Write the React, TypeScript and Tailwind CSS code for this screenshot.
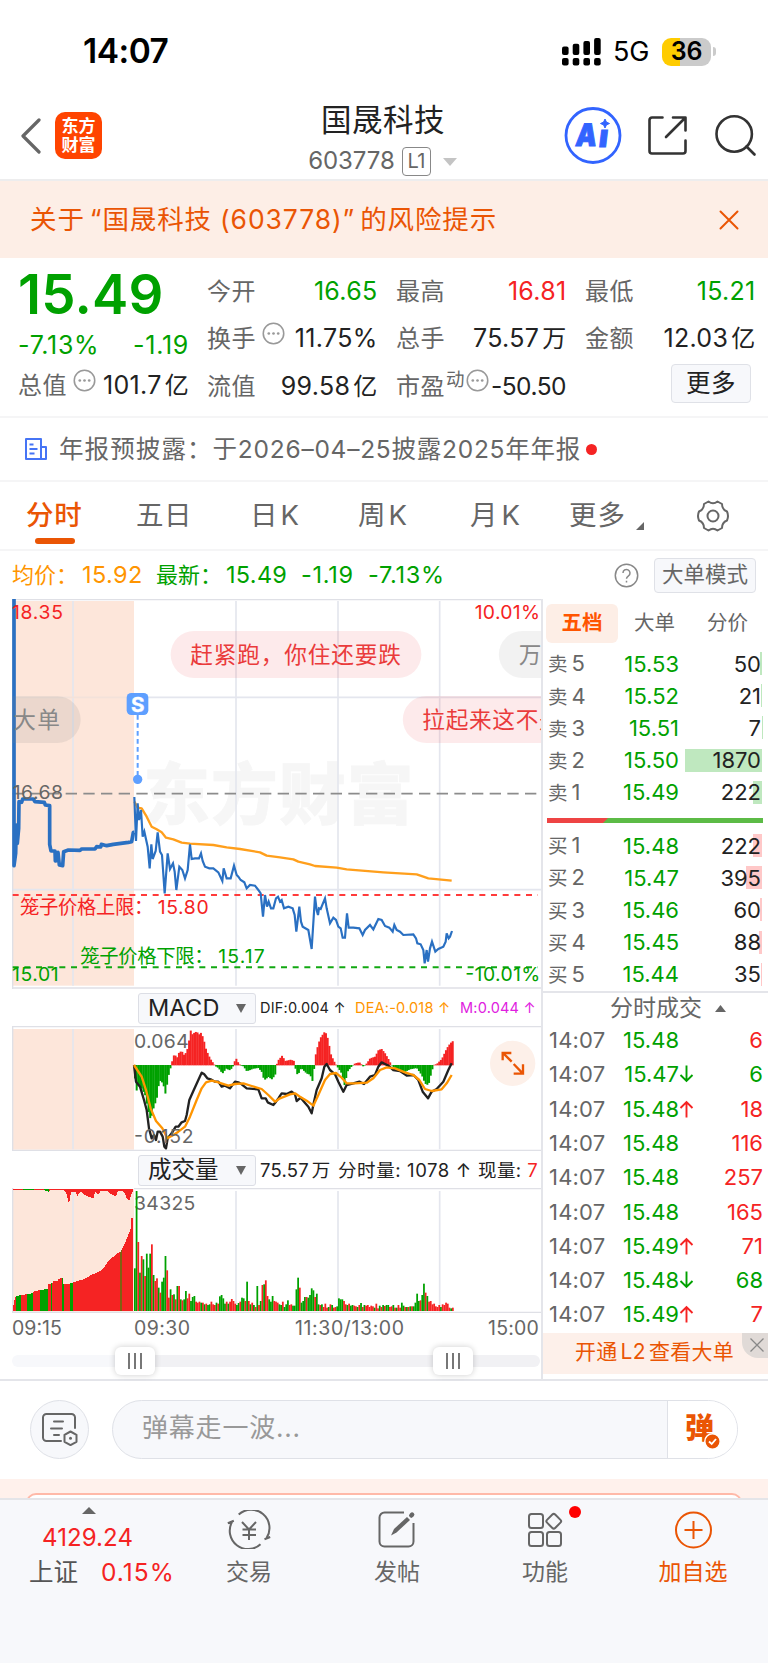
import React from "react";

// order book, best ask last
const asks = [
  { label: "5", price: "15.53", volume: "50", bar: 2 },
  { label: "4", price: "15.52", volume: "21", bar: 1 },
  { label: "3", price: "15.51", volume: "7", bar: 0.5 },
  { label: "2", price: "15.50", volume: "1870", bar: 77 },
  { label: "1", price: "15.49", volume: "222", bar: 9 },
];

const bids = [
  { label: "1", price: "15.48", volume: "222", bar: 9 },
  { label: "2", price: "15.47", volume: "395", bar: 16 },
  { label: "3", price: "15.46", volume: "60", bar: 2.5 },
  { label: "4", price: "15.45", volume: "88", bar: 3.5 },
  { label: "5", price: "15.44", volume: "35", bar: 1.5 },
];

const trades = [
  { price: "15.48", dir: "", volume: "6", buy: true },
  { price: "15.47", dir: "down", volume: "6", buy: false },
  { price: "15.48", dir: "up", volume: "18", buy: true },
  { price: "15.48", dir: "", volume: "116", buy: true },
  { price: "15.48", dir: "", volume: "257", buy: true },
  { price: "15.48", dir: "", volume: "165", buy: true },
  { price: "15.49", dir: "up", volume: "71", buy: true },
  { price: "15.48", dir: "down", volume: "68", buy: false },
  { price: "15.49", dir: "up", volume: "7", buy: true },
];

const auctionLine =
  "42,12 42,812 47,775 49,690 52,745 56,700 57,620 65,622 68,612 100,612 105,620 133,622 136,630 149,632 149,748 153,768 165,768 166,798 172,795 174,772 178,810 188,812 191,770 205,765 240,766 245,762 285,762 290,755 302,756 304,748 320,752 340,748 385,742 395,740 400,712 403,712";

const priceLine =
  "403,606 408,738 413,625 417,675 423,645 428,725 433,710 443,755 449,820 454,748 458,792 467,768 473,712 480,770 486,780 494,895 503,775 510,822 519,805 524,830 529,885 538,815 547,825 555,850 563,825 570,748 575,792 585,790 597,790 603,775 608,798 615,815 628,820 640,820 655,832 667,858 671,820 680,850 692,850 702,812 710,840 715,845 722,855 733,862 740,880 750,870 765,872 775,885 782,895 789,965 795,900 801,935 806,920 813,940 820,940 828,910 834,905 840,920 845,915 852,940 865,935 878,940 884,960 889,1010 898,935 903,980 908,995 925,1005 935,1062 945,905 950,945 954,960 957,940 962,942 975,910 980,940 990,985 1000,968 1008,975 1015,995 1022,1000 1028,1028 1035,1028 1041,955 1046,998 1060,998 1078,1000 1088,1020 1095,1005 1110,990 1120,1003 1135,972 1145,975 1155,993 1168,998 1178,1010 1183,990 1190,1005 1200,1010 1210,1020 1240,1018 1248,1030 1252,1045 1262,1048 1270,1065 1274,1105 1280,1065 1284,1100 1290,1060 1296,1040 1306,1070 1315,1062 1330,1055 1337,1040 1340,1015 1346,1030 1350,1025 1356,1008";

const averageLine =
  "403,620 413,638 425,640 440,665 455,695 470,703 485,712 498,728 520,733 545,743 570,746 640,750 680,757 720,762 780,772 800,782 840,787 880,793 895,800 930,808 945,813 1010,818 1040,823 1150,832 1250,838 1270,845 1285,850 1355,857";

const difLine =
  "402,240 408,290 420,305 432,345 440,375 447,430 455,460 462,450 468,465 473,440 480,440 488,455 493,485 498,490 503,460 515,445 527,425 535,425 545,412 555,408 560,390 568,345 580,318 595,285 605,263 612,267 622,280 632,283 645,290 655,290 665,305 675,302 690,310 705,290 715,292 725,298 740,310 775,313 785,340 797,340 803,352 820,360 828,350 835,340 845,325 860,327 875,320 885,328 890,348 902,338 912,350 925,365 935,385 942,350 950,315 965,280 973,245 980,237 990,255 1005,268 1015,290 1030,320 1040,300 1060,295 1078,290 1092,297 1110,275 1125,270 1135,245 1145,232 1155,237 1165,242 1180,255 1200,258 1220,272 1240,270 1255,285 1268,320 1284,340 1295,320 1310,312 1330,290 1345,255 1355,235";

const deaLine =
  "402,240 425,275 438,315 452,370 468,408 487,430 502,460 520,450 535,440 555,425 570,395 590,345 605,310 618,292 635,287 655,292 685,302 705,297 730,295 755,303 785,312 805,330 825,350 840,340 870,328 885,325 900,335 920,347 940,362 955,330 975,285 990,267 1008,264 1025,278 1040,295 1065,295 1100,293 1120,280 1140,255 1160,247 1185,250 1215,262 1240,270 1258,285 1275,312 1295,318 1325,313 1340,295 1355,270";

const macdPoints = [
  402, -10, 408, -80, 415, -60, 425, -70, 435, -90, 445, -140, 452, -165, 460, -130, 470, -100, 478, -45, 485, -50, 490, -60,
  497, -90, 503, -40, 512, -5, 517, 15, 523, 35, 530, 20, 537, 38, 545, 42, 552, 30, 560, 40, 566, 68, 571, 105, 578, 90,
  583, 98, 590, 100, 597, 92, 603, 97, 610, 80, 617, 50, 623, 35, 630, 20, 638, 8, 645, -2, 655, -8, 667, -25, 678, -10,
  690, -15, 698, -5, 702, 8, 708, 20, 714, 8, 720, 0, 730, -3, 740, -18, 760, -10, 775, -8, 785, -20, 792, -45, 805, -35,
  815, -42, 825, -30, 829, 0, 835, 15, 846, 28, 856, 12, 872, 16, 882, 12, 888, -20, 893, -30, 903, -8, 920, -25, 930, -28,
  938, -50, 943, 0, 948, 40, 960, 80, 975, 102, 983, 80, 993, 30, 1005, 5, 1012, -5, 1025, -25, 1033, -60, 1043, -18,
  1055, -3, 1065, 5, 1078, 8, 1090, -4, 1100, 5, 1110, 20, 1125, 25, 1135, 45, 1145, 48, 1155, 35, 1165, 18, 1173, 2,
  1185, -10, 1210, -22, 1230, -12, 1250, -8, 1265, -30, 1275, -55, 1285, -60, 1292, -30, 1300, 0, 1310, 3, 1325, 18,
  1340, 50, 1350, 65, 1362, 75,
];

const auctionVolume = [
  38, 18, 43, 43, 50, 46, 95, 53, 100, 60, 140, 66, 142, 81, 155, 83, 158, 90, 170, 91, 172, 97, 185, 98, 187, 81, 200, 80,
  215, 85, 250, 96, 275, 110, 295, 118, 310, 130, 322, 150, 350, 173, 360, 178, 370, 198, 390, 248, 392, 278, 400, 278,
];

const unmatchedVolume = [
  38, 3, 130, 3, 143, 8, 150, 3, 190, 4, 197, 15, 203, 38, 207, 35, 210, 10, 225, 10, 230, 20, 240, 8, 255, 20, 265, 24,
  278, 28, 283, 8, 292, 18, 300, 5, 320, 5, 330, 15, 345, 22, 352, 5, 370, 8, 378, 28, 385, 35, 390, 20, 398, 3,
];

const volumes =
  "g128 g360 r207 g115 r165 g155 r105 g172 g130 g172 r200 g108 r90 r98 g70 r55 g88 g100 g165 r122 r40 g65 r48 g50 r35 g75 r75 g35 r32 g35 g60 r38 r52 g30 g42 g45 r28 r25 r28 g25 r25 g20 r22 g18 g20 r28 r20 r18 g25 r22 g44 g48 g38 g22 r28 g22 r28 r36 r30 r22 g18 g24 r28 g40 g38 r30 g88 r30 g20 r25 g18 r12 g75 r18 g30 r78 g80 r92 r45 g35 g28 g45 r30 r28 r25 g20 g18 r28 g12 g20 g32 r18 r20 g16 g16 g65 g100 r70 g25 g30 g42 r42 g40 g48 g68 g62 r42 g52 g20 r18 g20 r12 r22 r10 g12 r20 g18 r10 r12 g14 g38 g35 g35 r30 r20 g18 r22 g16 g18 r16 r14 g12 r18 g24 r12 g18 r16 r18 r12 r16 r14 g10 r22 r8 g16 r12 g18 r15 g18 g18 r12 r14 g18 r10 g10 r18 r10 g25 g16 r12 g12 r12 g14 r14 g14 g25 g52 g30 r32 g48 g82 r55 g45 r28 r30 r20 r22 r14 r12 r18 g12 r20 r18 r25 r22 r10 g8 r10".split(
    " "
  );

const greenRanges = [
  [47, 60],
  [78, 97],
  [117, 142],
  [152, 155],
  [185, 189],
  [207, 216],
  [358, 364],
];

const RED = "#f52323";
const GREEN = "#00a100";

// pairs is a flat [x, y, x, y, ...] list sorted by x
function valueAt(pairs: number[], x: number) {
  for (let i = 2; i < pairs.length; i += 2) {
    if (x <= pairs[i]) {
      const t = (x - pairs[i - 2]) / (pairs[i] - pairs[i - 2]);
      return pairs[i - 1] + t * (pairs[i + 1] - pairs[i - 1]);
    }
  }
  return pairs[pairs.length - 1];
}

function range(from: number, to: number, step: number) {
  const out: number[] = [];
  for (let x = from; x < to; x += step) out.push(x);
  return out;
}

const Dots = () => (
  <svg className="size-[23px] shrink-0" viewBox="0 0 22 22" fill="none">
    <circle cx="11" cy="11" r="9.8" stroke="#999" strokeWidth="1.5" />
    <g fill="#999">
      <circle cx="6.5" cy="11" r="1.3" />
      <circle cx="11" cy="11" r="1.3" />
      <circle cx="15.5" cy="11" r="1.3" />
    </g>
  </svg>
);

const StatusBar = () => (
  <div className="flex h-[95px] items-center justify-between pl-[83px] pr-[52px] pt-[8px] text-black">
    <span className="text-[33.5px] font-semibold leading-none tracking-[-0.5px]">14:07</span>
    <div className="flex items-center">
      <svg width="39" height="28" viewBox="0 0 39 28">
        {[0, 1, 2, 3].map((i) => (
          <g key={i}>
            <rect x={i * 10.7} y="20" width="6.6" height="7.5" rx="2" />
            <rect x={i * 10.7} y={8.5 - i * 2.8} width="6.6" height={8.5 + i * 2.8} rx="2" />
          </g>
        ))}
      </svg>
      <span className="ml-[12px] text-[27px] leading-none tracking-[-0.3px]">5G</span>
      <div className="ml-[13px] flex h-7 w-[49px] items-center justify-center rounded-[9px] bg-linear-to-r from-[#ffcc00] from-36% to-[#cbcbcb] to-36%">
        <span className="text-[25px] font-semibold leading-none tracking-[-0.3px]">36</span>
      </div>
      <div className="ml-[2px] h-[9px] w-[3px] rounded-r-full bg-[#cbcbcb]" />
    </div>
  </div>
);

const Header = () => (
  <div className="flex h-[86px] border-b-2 border-[#ededee]">
    <div className="flex w-[290px] items-start">
      <svg className="ml-5 mt-[23px]" width="22" height="36" viewBox="0 0 22 36" fill="none">
        <path d="M19 2 3 18l16 16" stroke="#666" strokeWidth="3.2" strokeLinecap="round" strokeLinejoin="round" />
      </svg>
      <div className="ml-[13px] mt-[17px] flex h-[47px] w-[47px] flex-col items-center justify-center rounded-[10px] bg-[#ff4400] text-[17px] font-bold leading-[19px] text-white">
        <span>东方</span>
        <span>财富</span>
      </div>
    </div>
    <div className="flex w-[186px] flex-col items-center pt-[8px]">
      <span className="text-[30.5px] leading-[34px] tracking-[0.5px] text-[#222]">国晟科技</span>
      <div className="mt-[9px] flex items-center text-[#666]">
        <span className="text-[24px] leading-[30px] tracking-[-0.1px]">603778</span>
        <span className="ml-[7px] flex h-[29px] w-[29px] items-center justify-center rounded-[4px] border-[1.5px] border-[#888] text-[20px] leading-none tracking-[-0.5px]">
          L1
        </span>
        <svg className="ml-[11px]" width="16" height="9" viewBox="0 0 16 9">
          <path d="M1 1h14L8 9z" fill="#c4c4c4" />
        </svg>
      </div>
    </div>
    <div className="ml-[88px] flex">
      <svg className="mt-[12px]" width="58" height="57" viewBox="0 0 58 57">
        <circle cx="29" cy="28.5" r="27" fill="none" stroke="#3264ff" strokeWidth="2.8" />
        <g transform="translate(5 0) skewX(-7)" fontSize="31" fontWeight="900" fill="#3264ff" stroke="#3264ff" strokeWidth="1">
          <text x="10.500" y="39" textLength="21" lengthAdjust="spacingAndGlyphs">A</text>
          <text x="34" y="40" textLength="9" lengthAdjust="spacingAndGlyphs">ı</text>
        </g>
        <path d="M41 12l1.400 3.100 3.100 1.400-3.100 1.400-1.400 3.100-1.400-3.100-3.100-1.400 3.100-1.400z" fill="#3264ff" stroke="#3264ff" />
      </svg>
      <svg className="ml-[25px] mt-[20px]" width="42" height="42" viewBox="0 0 42 42" fill="none" stroke="#333" strokeWidth="2.6" strokeLinecap="round" strokeLinejoin="round">
        <path d="M15.500 2.500H5A2.500 2.500 0 0 0 2.500 5V36A2.500 2.500 0 0 0 5 38.500H36A2.500 2.500 0 0 0 38.500 36V25.500" />
        <path d="M26 2.500H38.500V15.500M38 3 19 22" />
      </svg>
      <svg className="ml-[25px] mt-[19px]" width="44" height="44" viewBox="0 0 44 44" fill="none" stroke="#333" strokeWidth="2.6" strokeLinecap="round">
        <circle cx="20.200" cy="20" r="17.700" />
        <path d="M32.500 32.500 40.500 40.500" />
      </svg>
    </div>
  </div>
);

const RiskBanner = () => (
  <div className="flex h-[77px] items-center justify-between bg-[#fdeee6] pl-[30px] pr-[29px] text-[#ea5504]">
    <span className="whitespace-pre text-[26.500px] leading-none tracking-[0.9px]">
      关于<span className="ml-[5px]">“</span>国晟科技<span className="ml-[8px]">(603778)</span>”<span className="ml-[5px]">的风险提示</span>
    </span>
    <svg width="20" height="20" viewBox="0 0 20 20" stroke="#ea5504" strokeWidth="2" strokeLinecap="round">
      <path d="M1.500 1.500l17 17M18.500 1.500l-17 17" />
    </svg>
  </div>
);

const Cell = ({ label, value, color = "text-[#222]", icon, unit }: { label: string; value: string; color?: string; icon?: boolean; unit?: string }) => (
  <div className="flex w-[170px] items-center justify-between">
    <span className="flex items-center gap-[6px] text-[24px] tracking-[0.5px] text-[#666]">
      {label}
      {icon && <span className="-mt-[11px]"><Dots /></span>}
    </span>
    <span className={`${color} -mr-[0.5px] text-[25px] tracking-[0.3px]`}>
      {value}
      {unit && <span className="ml-[3px] text-[24px]">{unit}</span>}
    </span>
  </div>
);

const Quotes = () => (
  <div className="flex h-[160px] gap-[19px] border-b-2 border-[#f5f5f6] pl-[18px] pt-[10px] leading-[47.3px]">
    <div className="flex w-[170px] flex-col text-[#00a100]">
      <span className="h-[54px] text-[54.500px] font-semibold leading-[52px] tracking-[0.2px]">15.49</span>
      <div className="-mr-[1px] flex h-[40px] justify-between text-[25px] leading-[46px] tracking-[0.7px]">
        <span>-7.13%</span>
        <span>-1.19</span>
      </div>
      <div className="-mr-[1px] flex h-[48px] items-center justify-between text-[25px] tracking-[0.3px] text-[#222]">
        <span className="flex items-center gap-[6px] text-[24px] tracking-[0.5px] text-[#666]">
          总值
          <span className="-mt-[11px]"><Dots /></span>
        </span>
        <span>101.7<span className="ml-[3px] text-[24px]">亿</span></span>
      </div>
    </div>
    <div>
      <Cell label="今开" value="16.65" color="text-[#00a100]" />
      <Cell label="换手" value="11.75%" icon />
      <Cell label="流值" value="99.58" unit="亿" />
    </div>
    <div>
      <Cell label="最高" value="16.81" color="text-[#f52323]" />
      <Cell label="总手" value="75.57" unit="万" />
      <div className="flex w-[170px] items-center justify-between">
        <span className="flex items-center text-[24px] tracking-[0.5px] text-[#666]">
          市盈
          <span className="-mt-[14px] ml-[1px] text-[18.500px] tracking-normal">动</span>
          <span className="-mt-[11px] ml-[1px]"><Dots /></span>
        </span>
        <span className="text-[24.500px] tracking-[-0.5px] text-[#222]">-50.50</span>
      </div>
    </div>
    <div>
      <Cell label="最低" value="15.21" color="text-[#00a100]" />
      <Cell label="金额" value="12.03" unit="亿" />
      <div className="ml-auto mr-[4px] mt-[1px] flex h-[39px] w-[80px] items-center justify-center rounded-[4px] border-[1.5px] border-[#dfe1e7] bg-[#f7f8fb] text-[24.5px] leading-none tracking-[0.5px] text-[#222]">
        更多
      </div>
    </div>
  </div>
);

const Notice = () => (
  <div className="flex h-[64px] items-center border-b-2 border-[#f5f5f6] pl-6 text-[#666]">
    <svg width="24" height="24" viewBox="0 0 24 24" fill="none" stroke="#4674f5" strokeWidth="2" strokeLinejoin="round">
      <path d="M2 2h15v20H2zM17 10h5v12H2M5.500 7.500h4M5.500 12h8M5.500 16.500h5" />
    </svg>
    <span className="ml-[11px] text-[24.5px] leading-none tracking-[1.1px]">年报预披露：</span>
    <span className="text-[24.500px] leading-none tracking-[0.75px]">于2026–04–25披露2025年年报</span>
    <span className="ml-[5px] size-[11px] rounded-full bg-[#f52323]" />
  </div>
);

const Tabs = () => (
  <div className="relative flex h-[69px] items-center border-b-2 border-[#f5f5f6] text-[27.500px] leading-none text-[#666]">
    <span className="absolute bottom-[5px] left-[35px] h-[6px] w-[40px] rounded-[3px] bg-[#ea5504]" />
    <span className="ml-[26px] w-[110px] font-medium tracking-[0.8px] text-[#ea5504]">分时</span>
    <span className="w-[114px] tracking-[0.5px]">五日</span>
    <span className="w-[108px]">日<span className="ml-[3px]">K</span></span>
    <span className="w-[112px]">周<span className="ml-[3px]">K</span></span>
    <span className="w-[99px]">月<span className="ml-[4px]">K</span></span>
    <span className="tracking-[1px]">更多</span>
    <svg className="ml-[10px] mt-[20px]" width="8" height="8" viewBox="0 0 8 8">
      <path d="M8 0v8H0z" fill="#666" />
    </svg>
    <svg className="ml-[52px]" width="34" height="32" viewBox="0 0 34 32" fill="none" stroke="#666" strokeWidth="2">
      <path strokeLinejoin="round" d="M12.500 1.500Q17 5 21.500 1.500L26 4Q26 9.500 31 11.500Q33 16 31 20.500Q26 22.500 26 28L21.500 30.500Q17 27 12.500 30.500L8 28Q8 22.500 3 20.500Q1 16 3 11.500Q8 9.500 8 4Z" />
      <circle cx="17" cy="16" r="5.500" />
    </svg>
  </div>
);

const AverageRow = () => (
  <div className="flex h-[48px] items-center pl-[12px] pr-[12px] text-[23.500px] leading-none text-[#00a100]">
    <span className="w-[70px] whitespace-nowrap text-[22px] text-[#ff9500]">均价：</span>
    <span className="w-[74px] tracking-[0.4px] text-[#ff9500]">15.92</span>
    <span className="w-[70px] whitespace-nowrap text-[22px]">最新：</span>
    <span className="w-[75px] tracking-[0.3px]">15.49</span>
    <span className="w-[67px] tracking-[0.7px]">-1.19</span>
    <span className="tracking-[0.7px]">-7.13%</span>
    <svg className="ml-auto mr-[15px]" width="25" height="25" viewBox="0 0 25 25" fill="none">
      <circle cx="12.500" cy="12.500" r="11.200" stroke="#888" strokeWidth="1.500" />
      <path d="M9 10a3.500 3.500 0 1 1 5.500 2.800c-1.400 1-2 1.500-2 3M12.500 17.800v1.600" stroke="#888" strokeWidth="1.500" />
    </svg>
    <span className="flex h-[35px] w-[102px] items-center justify-center rounded-[4px] border-[1.5px] border-[#dfe1e7] bg-[#f7f8fb] text-[21.500px] text-[#666]">
      大单模式
    </span>
  </div>
);

// panes share one coordinate space, three units to a pixel
const PricePane = () => (
  <svg className="block" width="541" height="390" viewBox="0 12 1623 1170" fill="none">
    <rect x="38" y="18" width="364" height="1154" fill="#fde6da" />
    <g fontSize="200" fontWeight="900" fill="#f6f6f6" stroke="#f6f6f6" strokeWidth="2">
      <text x="430" y="672" textLength="810">东方财富</text>
    </g>
    <g stroke="#e4e6ee" strokeWidth="5">
      <path d="M219 18V1172M708 18V1172M1014 18V1172M1319 18V1172M402 307H1623M38 884H1623" />
      <path d="M38 14H1626M38 12V1182M36 1179H1626" stroke="#dfe0e6" strokeWidth="4" />
    </g>
    <path d="M38 307H402" stroke="#f3e2da" strokeWidth="5" />
    <path d="M38 596H1614" stroke="#8c8c8c" strokeWidth="5" strokeDasharray="34 19" />
    <path d="M38 900H1614" stroke="#ff3b3b" strokeWidth="6" strokeDasharray="18 17" />
    <path d="M38 1117H1614" stroke="#12a812" strokeWidth="6" strokeDasharray="18 17" />
    <polyline points={auctionLine} stroke="#2a70c2" strokeWidth="11" strokeLinejoin="round" />
    <polyline points={averageLine} stroke="#ff9f1c" strokeWidth="7" strokeLinejoin="round" />
    <polyline points={priceLine} stroke="#2a70c2" strokeWidth="6.500" />
    <g fontSize="58">
      <text x="36" y="71" fill={RED} textLength="153">18.35</text>
      <text x="1424" y="71" fill={RED} textLength="196">10.01%</text>
      <text x="38" y="613" fill="#666" textLength="151">16.68</text>
      <text x="36" y="1157" fill={GREEN} textLength="140">15.01</text>
      <text x="1396" y="1157" fill={GREEN} textLength="225">-10.01%</text>
      <text x="60" y="958" fill={RED} textLength="400">笼子价格上限：</text>
      <text x="473" y="958" fill={RED} textLength="153">15.80</text>
      <text x="241" y="1105" fill={GREEN} textLength="400">笼子价格下限：</text>
      <text x="655" y="1105" fill={GREEN} textLength="139">15.17</text>
    </g>
    <path d="M413 360V545" stroke="#5e9fff" strokeWidth="6" strokeDasharray="14 10" />
    <circle cx="413" cy="553" r="14" fill="#5e9fff" />
    <rect x="380" y="294" width="65" height="66" rx="14" fill="#5e9fff" />
    <text x="413" y="350" fontSize="62" fontWeight="700" fill="#fff" stroke="#fff" textAnchor="middle">S</text>
    <g fontSize="68">
      <rect x="512" y="108" width="752" height="141" rx="70" fill="#ee3f4a" fillOpacity=".11" />
      <text x="571" y="205" fill="#ea3b3b" textLength="632">赶紧跑，你住还要跌</text>
      <path d="M38 304H172a70 70 0 0 1 0 140H38z" fill="#888" fillOpacity=".15" />
      <text x="40" y="400" fill="#888" textLength="140">大单</text>
      <path d="M1626 108H1567a70 70 0 0 0 0 141H1626z" fill="#888" fillOpacity=".11" />
      <text x="1556" y="205" fill="#888">万</text>
      <path d="M1626 303H1279a70 70 0 0 0 0 141H1626z" fill="#ee3f4a" fillOpacity=".11" />
      <text x="1267" y="400" fill="#ea3b3b" textLength="418">拉起来这不是</text>
    </g>
  </svg>
);

const MacdPane = () => (
  <svg className="block" width="541" height="125" viewBox="0 123 1623 375" fill="none">
    <rect x="38" y="132" width="364" height="362" fill="#fde6da" />
    <path d="M219 132V493M708 132V493M1014 132V493M1319 132V493" stroke="#e4e6ee" strokeWidth="5" />
    <path d="M38 125H1626M38 123V498M36 496H1626" stroke="#dfe0e6" strokeWidth="4" />
    <text x="402" y="190" fontSize="58" fill="#666" textLength="164">0.064</text>
    {range(402, 1360, 5.07).map((x) => {
      const h = valueAt(macdPoints, x + 2.5);
      return <rect key={x} x={x} y={h > 0 ? 240 - h : 240} width="6" height={Math.abs(h) + 1} fill={h > 0 ? RED : GREEN} />;
    })}
    <polyline points={difLine} stroke="#222" strokeWidth="7" strokeLinejoin="round" />
    <polyline points={deaLine} stroke="#ff9500" strokeWidth="7" strokeLinejoin="round" />
    <text x="402" y="474" fontSize="58" fill="#666" textLength="179">-0.152</text>
    <circle cx="1538" cy="235" r="68" fill="#fdf0e9" />
    <path d="M1535 230 1509 204M1508 226V204H1534M1541 237 1568 265M1541 266H1569V238" stroke="#ea5504" strokeWidth="7" />
  </svg>
);

const VolumePane = () => {
  const step = (1361 - 402) / volumes.length;
  return (
    <svg className="block" width="541" height="125" viewBox="0 609 1623 375" fill="none">
      <rect x="38" y="612" width="364" height="368" fill="#fde6da" />
      <path d="M219 618V980M708 618V980M1014 618V980M1319 618V980" stroke="#e4e6ee" strokeWidth="5" />
      <path d="M402 611H1626M38 609V984M36 982H1626" stroke="#dfe0e6" strokeWidth="4" />
      {range(38, 397, 3).map((x) => {
        const h = valueAt(auctionVolume, x);
        const green = greenRanges.some(([a, b]) => x >= a && x < b);
        const hang = valueAt(unmatchedVolume, x);
        return (
          <g key={x} shapeRendering="crispEdges">
            <rect x={x} y={978 - h} width="3" height={h} fill={green ? (x > 300 ? "#806010" : GREEN) : RED} />
            <rect x={x} y="612" width="3" height={hang} fill={(x > 66 && x < 100) || (x > 130 && x < 144) ? GREEN : RED} />
          </g>
        );
      })}
      <text x="402" y="676" fontSize="58" fill="#666" textLength="184">34325</text>
      {volumes.map((v, i) => {
        const h = Number(v.slice(1));
        return <rect key={i} x={402 + i * step} y={978 - h} width="5.300" height={h} fill={v[0] === "g" ? GREEN : RED} />;
      })}
    </svg>
  );
};

const Select = ({ label }: { label: string }) => (
  <div className="flex h-[31px] w-[118px] items-center justify-between rounded-[3px] border border-[#dcdee5] bg-[#f7f8fb] pl-[9px] pr-[9px] text-[#222]">
    <span className="text-[23.500px] leading-none">{label}</span>
    <svg width="10" height="9" viewBox="0 0 10 9">
      <path d="M0 0h10L5 9z" fill="#666" />
    </svg>
  </div>
);

const Handle = () => (
  <div className="z-10 flex h-[28px] w-[40px] items-center justify-center gap-[4px] rounded-[6px] bg-white shadow-[0_0_6px_rgba(0,0,0,0.2)]">
    <span className="h-[16px] w-[2px] bg-[#777]" />
    <span className="h-[16px] w-[2px] bg-[#777]" />
    <span className="h-[16px] w-[2px] bg-[#777]" />
  </div>
);

const Charts = () => (
  <div className="flex w-[541px] flex-col">
    <PricePane />
    <div className="flex h-[37px] items-center whitespace-nowrap pl-[138px] pt-[1px] text-[14.500px] leading-none tracking-[0.2px]">
      <Select label="MACD" />
      <span className="ml-[4px] w-[95px] text-[#222]">DIF:0.004 ↑</span>
      <span className="w-[105px] text-[#ff9500]">DEA:-0.018 ↑</span>
      <span className="text-[#e020e0]">M:0.044 ↑</span>
    </div>
    <MacdPane />
    <div className="flex h-[37px] items-center whitespace-nowrap pl-[138px] pt-[1px] text-[18.5px] leading-none text-[#222]">
      <Select label="成交量" />
      <span className="ml-[4px] w-[78px] tracking-[0.2px]">75.57<span className="ml-[3px]">万</span></span>
      <span className="w-[140px] tracking-[0.6px]">分时量: 1078 ↑</span>
      <span className="tracking-[0.4px]">现量: <span className="text-[#f52323]">7</span></span>
    </div>
    <VolumePane />
    <div className="flex h-[31px] items-center pl-[12px] pt-[1px] text-[19.5px] leading-none text-[#666]">
      <span className="w-[122px]">09:15</span>
      <span className="w-[161px] tracking-[0.4px]">09:30</span>
      <span className="w-[193px] tracking-[0.6px]">11:30/13:00</span>
      <span className="tracking-[0.2px]">15:00</span>
    </div>
    <div className="flex h-[34px] items-center pl-[12px]">
      <div className="h-[12px] w-[103px] rounded-l-full bg-[#f7f8fb]" />
      <Handle />
      <div className="h-[12px] w-[278px] bg-[#f1f1f4]" />
      <Handle />
      <div className="h-[12px] w-[67px] rounded-r-full bg-[#f1f1f4]" />
    </div>
  </div>
);

const BookRow = ({ side, label, price, volume, bar }: { side: string; label: string; price: string; volume: string; bar: number }) => (
  <div className="relative flex h-[32.2px] items-center pb-[1px] pl-[5px] pr-[7px] text-[22px] leading-none">
    <span
      className={`absolute right-[6px] top-[4px] h-[23px] ${side === "卖" ? "bg-[#bfe8bf]" : "bg-[#ffc8c8]"}`}
      style={{ width: bar }}
    />
    <span className="w-[52px] text-[#666]">
      <span className="text-[19.500px]">{side}</span>
      <span className="ml-[4px]">{label}</span>
    </span>
    <span className="w-[79px] text-right text-[#00a100]">{price}</span>
    <span className="relative ml-auto text-[#222]">{volume}</span>
  </div>
);

const OrderBook = () => (
  <div className="flex w-[227px] flex-col border-l-2 border-[#e4e5ea]">
    <div className="flex h-[49px] items-center pl-[3px] text-[20.5px] leading-none text-[#666]">
      <span className="flex h-[39px] w-[72px] items-center justify-center rounded-[6px] bg-[#fdeee6] font-bold text-[#ff5500]">五档</span>
      <span className="ml-[16px]">大单</span>
      <span className="ml-[32px]">分价</span>
    </div>
    {asks.map((row) => (
      <BookRow key={row.label} side="卖" {...row} />
    ))}
    <div className="ml-[4px] mr-[5px] flex h-[21px] items-center pt-[2px]">
      <svg width="216" height="5" viewBox="0 0 216 5">
        <path d="M0 0h216v5H0z" fill="#5cbb46" />
        <path d="M0 0h61l-5 5H0z" fill="#ee4444" />
      </svg>
    </div>
    {bids.map((row) => (
      <BookRow key={row.label} side="买" {...row} />
    ))}
    <div className="flex h-[33px] items-center border-t-2 border-[#e4e5ea] pl-[67px] text-[23px] leading-none text-[#666]">
      分时成交
      <svg className="ml-[13px]" width="11" height="7" viewBox="0 0 11 7">
        <path d="M5.500 0 11 7H0z" fill="#666" />
      </svg>
    </div>
    {trades.map((t, i) => (
      <div key={i} className="flex h-[34.300px] items-center pb-[2px] pl-[6px] pr-[5px] text-[22px] leading-none">
        <span className="w-[52px] tracking-[0.2px] text-[#666]">14:07</span>
        <span className="w-[78px] text-right text-[#00a100]">{t.price}</span>
        {t.dir !== "" && (
          <svg width="15" height="18" viewBox="0 0 15 18" fill="none" stroke={t.dir === "up" ? RED : GREEN} strokeWidth="1.900">
            {t.dir === "up" ? <path d="M7.500 17.500V2M1.500 8l6-6 6 6" /> : <path d="M7.500 .5V16M1.500 10l6 6 6-6" />}
          </svg>
        )}
        <span className={`ml-auto ${t.buy ? "text-[#f52323]" : "text-[#00a100]"}`}>{t.volume}</span>
      </div>
    ))}
    <div className="relative flex h-[41px] items-center overflow-hidden bg-[#fdf0ea] pb-[3px] pl-[32px] text-[21px] leading-none text-[#ea5504]">
      <span className="whitespace-nowrap tracking-[0.3px]">开通<span className="mx-[3px]">L2</span>查看大单</span>
      <span className="absolute right-0 top-0 flex h-[25px] w-[26px] items-center justify-center rounded-bl-[16px] bg-[#e0dad7]">
        <svg className="ml-[3px]" width="14" height="14" viewBox="0 0 14 14" stroke="#888" strokeWidth="1.300">
          <path d="M.5.5l13 13M13.500.5l-13 13" />
        </svg>
      </span>
    </div>
  </div>
);

const DanmakuBar = () => (
  <div className="flex h-[98px] items-start pl-[30px] pt-[19px]">
    <div className="flex size-[59px] items-center justify-center rounded-full border-[1.5px] border-[#dfe1e7] bg-[#f7f8fb]">
      <svg width="38" height="34" viewBox="0 0 38 34" fill="none" stroke="#666" strokeWidth="2" strokeLinecap="round">
        <path d="M20 28H5.500A3.500 3.500 0 0 1 2 24.500V4.500A3.500 3.500 0 0 1 5.500 1H30.500A3.500 3.500 0 0 1 34 4.500V15" />
        <path d="M13 8.500h9M10 15.500h11M13 22h5" />
        <path d="M29.500 18.500l6 3.300v7l-6 3.300-6-3.300v-7z" strokeLinejoin="round" />
        <circle cx="29.500" cy="25.300" r="1.500" fill="#666" stroke="none" />
      </svg>
    </div>
    <div className="ml-[23px] flex h-[59px] w-[626px] overflow-hidden rounded-full border-[1.5px] border-[#dfe1e7] bg-[#f7f8fb]">
      <span className="w-[555px] border-r-[1.5px] border-[#dfe1e7] pl-[29px] text-[26px] leading-[53px] tracking-[0.8px] text-[#999]">弹幕走一波...</span>
      <span className="relative flex-1 bg-white pl-[17px] text-[29px] font-black leading-[55px] text-[#ea5504]">
        弹
        <svg className="absolute left-[36px] top-[32px]" width="17" height="17" viewBox="0 0 17 17">
          <circle cx="8.500" cy="8.500" r="7.700" fill="#ea5504" stroke="#fff" strokeWidth="1.500" />
          <path d="M5 8.500l2.700 2.500 4.300-5" fill="none" stroke="#fff" strokeWidth="1.900" />
        </svg>
      </span>
    </div>
  </div>
);

const NavItem = ({ label, children, className = "text-[#666]" }: { label: string; children: React.ReactNode; className?: string }) => (
  <div className={`flex w-[148px] flex-col items-center pt-[10px] ${className}`}>
    {children}
    <span className="mt-[10px] text-[23px] leading-[26px]">{label}</span>
  </div>
);

const BottomNav = () => (
  <div className="flex h-[165px] border-t-2 border-[#e4e5e9] bg-[#f7f8fb]">
    <div className="w-[175px] pl-[29px] pt-[7px] leading-none">
      <svg className="ml-[53px]" width="14" height="7" viewBox="0 0 14 7">
        <path d="M7 0l7 7H0z" fill="#666" />
      </svg>
      <div className="ml-[13px] mt-[12px] text-[24px] tracking-[0.1px] text-[#f52323]">4129.24</div>
      <div className="mt-[10px] flex items-center text-[24.500px]">
        <span className="text-[#555]">上证</span>
        <span className="ml-[23px] tracking-[1px] text-[#f52323]">0.15%</span>
      </div>
    </div>
    <NavItem label="交易">
      <svg width="44" height="39" viewBox="0 0 44 39" fill="none" stroke="#666" strokeWidth="2">
        <path d="M11.700 4.600A18.300 18.300 0 0 1 39.500 28M37.500 29.200 43.200 27" />
        <path d="M33.500 34.200A18.300 18.300 0 0 1 5 12M.8 13.200 6.800 10.800" />
        <path d="M15 12l7 7.500 7-7.500M22 19.500V30M15.500 19.500h13.500M15.500 25h13.500" />
      </svg>
    </NavItem>
    <NavItem label="发帖">
      <svg width="38" height="39" viewBox="0 0 38 39" fill="none" stroke="#666" strokeWidth="2">
        <path d="M26 2.500H6.500A5 5 0 0 0 1.500 7.500V31.500A5 5 0 0 0 6.500 36.500H30.500A5 5 0 0 0 35.500 31.500V13" />
        <path d="M13 25.500l3-6.500L29 7l3 3-13.500 12.500z" fill="#666" stroke="none" />
        <path d="M33.300 5.500l.8-.8" strokeWidth="4.500" strokeLinecap="round" />
      </svg>
    </NavItem>
    <NavItem label="功能">
      <div className="relative">
        <svg width="36" height="39" viewBox="0 0 36 39" fill="none" stroke="#666" strokeWidth="2">
          <rect x="2" y="4" width="14" height="14" rx="2.500" />
          <rect x="2" y="22" width="14" height="14" rx="2.500" />
          <rect x="20" y="22" width="14" height="14" rx="2.500" />
          <rect x="21" y="5.500" width="11.500" height="11.500" rx="2" transform="rotate(45 26.750 11.250)" />
        </svg>
        <span className="absolute -right-[18px] -top-[4px] size-[12px] rounded-full bg-[#ff0000]" />
      </div>
    </NavItem>
    <NavItem label="加自选" className="text-[#ea5504]">
      <svg width="39" height="39" viewBox="0 0 39 39" fill="none" stroke="#ea5504" strokeWidth="2">
        <circle cx="19.500" cy="20" r="17.500" />
        <path d="M19.500 11v18M10.500 20h18" />
      </svg>
    </NavItem>
  </div>
);

export default function App() {
  return (
    <div className="h-[1663px] w-[768px] overflow-hidden bg-white font-[Inter,'Noto_Sans_CJK_SC',sans-serif]">
      <StatusBar />
      <Header />
      <RiskBanner />
      <Quotes />
      <Notice />
      <Tabs />
      <AverageRow />
      <div className="flex h-[782px] border-b-2 border-[#e4e5ea]">
        <Charts />
        <OrderBook />
      </div>
      <DanmakuBar />
      <div className="h-[19px] overflow-hidden bg-[#fff1ec] px-[26px] pt-[14px]">
        <div className="h-[60px] rounded-[10px] border-2 border-[#ffb9a8] bg-white" />
      </div>
      <BottomNav />
    </div>
  );
}
